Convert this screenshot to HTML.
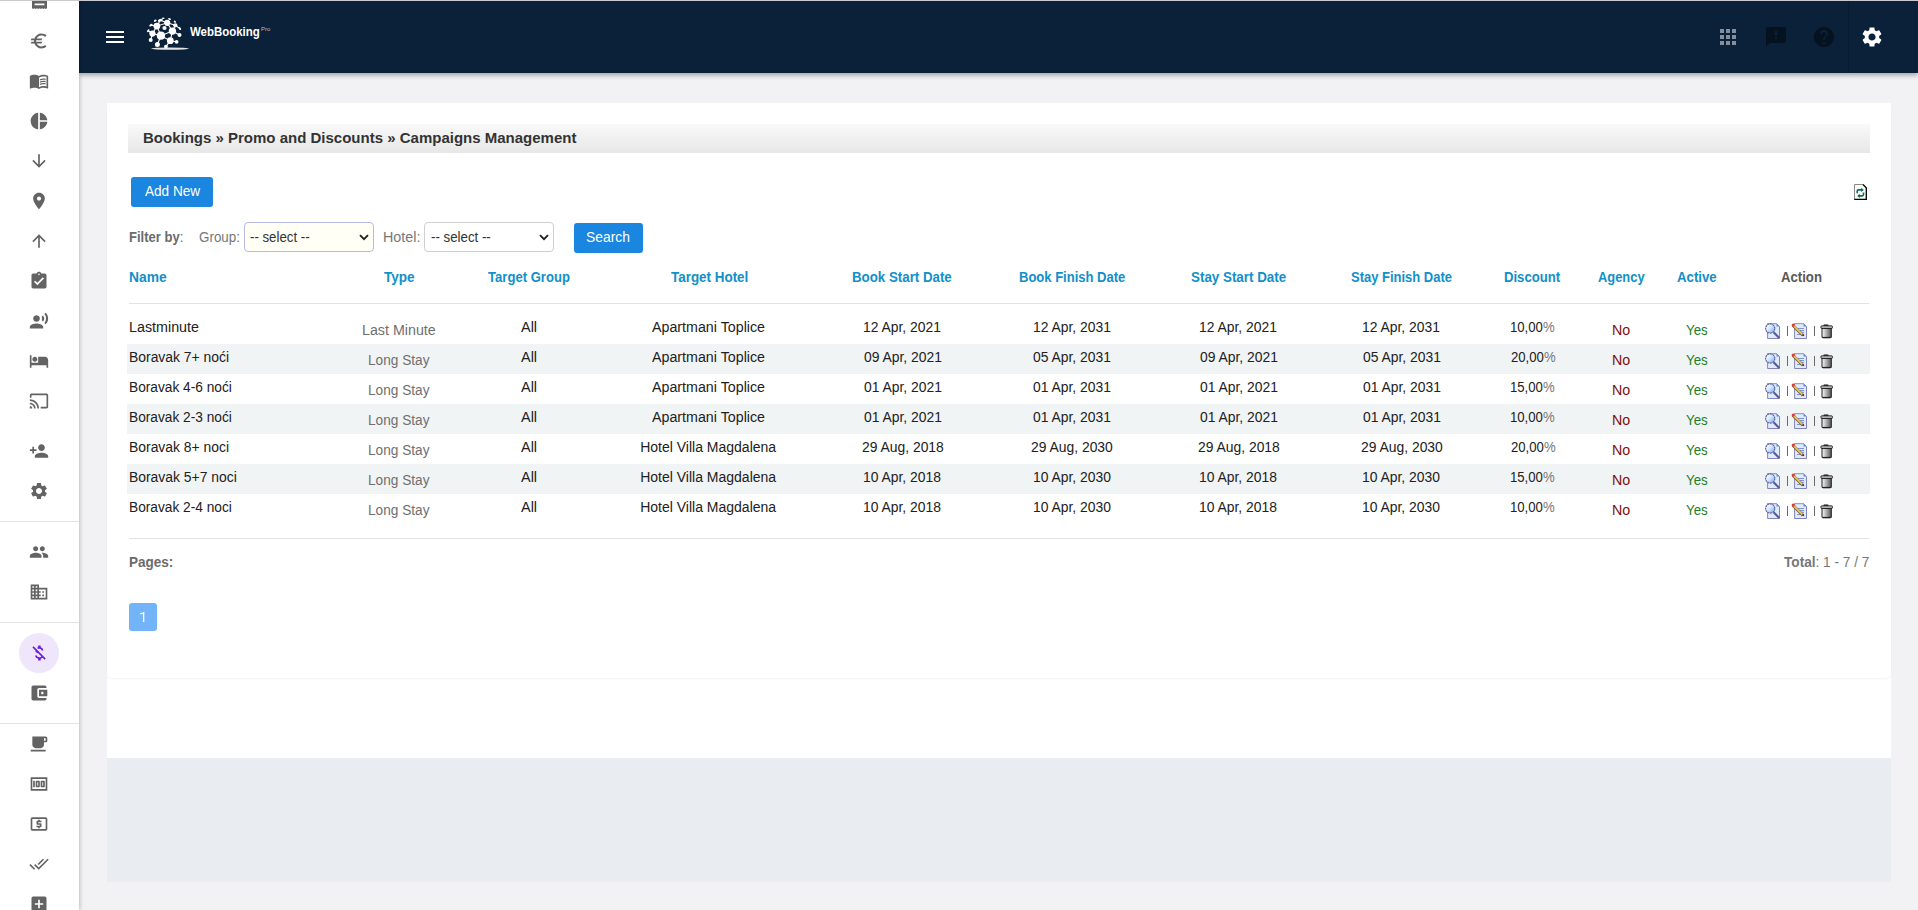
<!DOCTYPE html>
<html><head><meta charset="utf-8">
<style>
*{box-sizing:border-box}
html,body{margin:0;padding:0}
body{width:1918px;height:910px;overflow:hidden;position:relative;background:#f2f2f4;font-family:"Liberation Sans",sans-serif;color:#212121}
.abs{position:absolute}
.tx{position:absolute;white-space:nowrap;z-index:4}
#topline{left:0;top:0;width:1918px;height:1px;background:#c9cacc;z-index:5}
#side{left:0;top:1px;width:79px;height:909px;background:#fff;box-shadow:1px 0 4px rgba(0,0,0,.22);z-index:3}
#side svg{position:absolute;left:29px;width:20px;height:20px;fill:#636363}
#side .dv{position:absolute;left:0;width:79px;height:1px;background:#e4e4e4}
#hdr{left:79px;top:1px;width:1839px;height:72px;background:#0b2039;box-shadow:0 2px 5px rgba(0,0,0,.35);z-index:2}
#main{left:107px;top:103px;width:1784px;height:655px;background:#fff}
#card{left:107px;top:103px;width:1784px;height:575px;background:#fff;border-radius:5px;box-shadow:0 1px 2px rgba(0,0,0,.05)}
#foot{left:107px;top:758px;width:1784px;height:124px;background:#e9edf1}
#bc{left:128px;top:124px;width:1742px;height:29px;background:linear-gradient(#f9f9f9,#e7e7e7)}
.btn{position:absolute;background:#1a86df;border-radius:3px}
.sel{position:absolute;height:30px;border:1px solid #cfcfcf;border-radius:4px;background:#fff}
.hr{position:absolute;left:129px;width:1740px;height:1px;background:#e3e3e3}
.row{position:absolute;left:127px;width:1743px;height:30px;background:#f1f4f5}
</style></head><body>
<div id="topline" class="abs"></div>
<div id="side" class="abs">
<svg viewBox="0 0 24 24" style="top:30px"><path d="M15 18.5c-2.51 0-4.68-1.42-5.76-3.5H15l1-2H8.58c-.05-.33-.08-.66-.08-1s.03-.67.08-1H15l1-2H9.24C10.32 6.92 12.5 5.5 15 5.5c1.61 0 3.09.59 4.23 1.57L21 5.3C19.41 3.87 17.3 3 15 3c-3.92 0-7.24 2.51-8.48 6H3l-1 2h4.06c-.04.33-.06.66-.06 1s.02.67.06 1H3l-1 2h4.52c1.24 3.49 4.56 6 8.48 6 2.31 0 4.41-.87 6-2.3l-1.78-1.77c-1.13.98-2.6 1.57-4.22 1.57z"/></svg>
<svg viewBox="0 0 24 24" style="top:70px"><path d="M21 5c-1.11-.35-2.33-.5-3.5-.5-1.95 0-4.05.4-5.5 1.5-1.45-1.1-3.55-1.5-5.5-1.5S2.45 4.9 1 6v14.65c0 .25.25.5.5.5.1 0 .15-.05.25-.05C3.1 20.45 5.05 20 6.5 20c1.95 0 4.05.4 5.5 1.5 1.35-.85 3.8-1.5 5.5-1.5 1.65 0 3.35.3 4.75 1.05.1.05.15.05.25.05.25 0 .5-.25.5-.5V6c-.6-.45-1.25-.75-2-1zm0 13.5c-1.1-.35-2.3-.5-3.5-.5-1.7 0-4.15.65-5.5 1.5V8c1.35-.85 3.8-1.5 5.5-1.5 1.2 0 2.4.15 3.5.5v11.5z M17.5 10.5c.88 0 1.73.09 2.5.26V9.24c-.79-.15-1.64-.24-2.5-.24-1.7 0-3.24.29-4.5.83v1.66c1.13-.64 2.7-.99 4.5-.99zM13 12.49v1.66c1.13-.64 2.7-.99 4.5-.99.88 0 1.73.09 2.5.26V11.9c-.79-.15-1.64-.24-2.5-.24-1.7 0-3.24.3-4.5.83zM17.5 14.33c-1.7 0-3.24.29-4.5.83v1.66c1.13-.64 2.7-.99 4.5-.99.88 0 1.73.09 2.5.26v-1.52c-.79-.16-1.64-.24-2.5-.24z"/></svg>
<svg viewBox="0 0 24 24" style="top:110px"><path d="M11 2v20c-5.07-.5-9-4.79-9-10s3.93-9.5 9-10zm2.03 0v8.99H22c-.47-4.74-4.24-8.52-8.97-8.99zm0 11.01V22c4.74-.47 8.5-4.25 8.97-8.99h-8.97z"/></svg>
<svg viewBox="0 0 24 24" style="top:150px"><path d="M20 12l-1.41-1.41L13 16.17V4h-2v12.17l-5.58-5.59L4 12l8 8 8-8z"/></svg>
<svg viewBox="0 0 24 24" style="top:190px"><path d="M12 2C8.13 2 5 5.13 5 9c0 5.25 7 13 7 13s7-7.75 7-13c0-3.87-3.13-7-7-7zm0 9.5c-1.38 0-2.5-1.12-2.5-2.5s1.12-2.5 2.5-2.5 2.5 1.12 2.5 2.5-1.12 2.5-2.5 2.5z"/></svg>
<svg viewBox="0 0 24 24" style="top:230px"><path d="M4 12l1.41 1.41L11 7.83V20h2V7.83l5.58 5.59L20 12l-8-8-8 8z"/></svg>
<svg viewBox="0 0 24 24" style="top:270px"><path d="M19 3h-4.18C14.4 1.84 13.3 1 12 1c-1.3 0-2.4.84-2.82 2H5c-1.1 0-2 .9-2 2v14c0 1.1.9 2 2 2h14c1.1 0 2-.9 2-2V5c0-1.1-.9-2-2-2zm-7 0c.55 0 1 .45 1 1s-.45 1-1 1-1-.45-1-1 .45-1 1-1zm-2 14l-4-4 1.41-1.41L10 14.17l6.59-6.59L18 9l-8 8z"/></svg>
<svg viewBox="0 0 24 24" style="top:310px"><path d="M9 5a4 4 0 1 0 0.001 0z M9 15c-2.67 0-8 1.34-8 4v2h16v-2c0-2.66-5.33-4-8-4zm7.76-9.64l-1.68 1.69c.84 1.18.84 2.71 0 3.89l1.68 1.69c2.02-2.02 2.02-5.07 0-7.27zM20.07 2l-1.63 1.63c2.77 3.02 2.77 7.56 0 10.74L20.07 16c3.9-3.89 3.91-9.95 0-14z"/></svg>
<svg viewBox="0 0 24 24" style="top:350px"><path d="M7 13c1.66 0 3-1.34 3-3S8.66 7 7 7s-3 1.34-3 3 1.34 3 3 3zm12-6h-8v7H3V5H1v15h2v-3h18v3h2v-9c0-2.21-1.79-4-4-4z"/></svg>
<svg viewBox="0 0 24 24" style="top:390px"><path d="M21 3H3c-1.1 0-2 .9-2 2v3h2V5h18v14h-7v2h7c1.1 0 2-.9 2-2V5c0-1.1-.9-2-2-2zM1 18v3h3c0-1.66-1.34-3-3-3zm0-4v2c2.76 0 5 2.24 5 5h2c0-3.87-3.13-7-7-7zm0-4v2c4.97 0 9 4.03 9 9h2c0-6.08-4.93-11-11-11z"/></svg>
<svg viewBox="0 0 24 24" style="top:440px"><path d="M15 12c2.21 0 4-1.79 4-4s-1.79-4-4-4-4 1.79-4 4 1.79 4 4 4zm-9-2V7H4v3H1v2h3v3h2v-3h3v-2H6zm9 4c-2.67 0-8 1.34-8 4v2h16v-2c0-2.66-5.33-4-8-4z"/></svg>
<svg viewBox="0 0 24 24" style="top:480px"><path d="M19.14 12.94c.04-.3.06-.61.06-.94 0-.32-.02-.64-.07-.94l2.03-1.58c.18-.14.23-.41.12-.61l-1.92-3.32c-.12-.22-.37-.29-.59-.22l-2.39.96c-.5-.38-1.03-.7-1.62-.94l-.36-2.54c-.04-.24-.24-.41-.48-.41h-3.84c-.24 0-.43.17-.47.41l-.36 2.54c-.59.24-1.13.57-1.62.94l-2.39-.96c-.22-.08-.47 0-.59.22L2.74 8.87c-.12.21-.08.47.12.61l2.03 1.58c-.05.3-.09.63-.09.94s.02.64.07.94l-2.03 1.58c-.18.14-.23.41-.12.61l1.92 3.32c.12.22.37.29.59.22l2.39-.96c.5.38 1.03.7 1.62.94l.36 2.54c.05.24.24.41.48.41h3.84c.24 0 .44-.17.47-.41l.36-2.54c.59-.24 1.13-.56 1.62-.94l2.39.96c.22.08.47 0 .59-.22l1.92-3.32c.12-.22.07-.47-.12-.61l-2.01-1.58zM12 15.6c-1.98 0-3.6-1.62-3.6-3.6s1.62-3.6 3.6-3.6 3.6 1.62 3.6 3.6-1.62 3.6-3.6 3.6z"/></svg>
<svg viewBox="0 0 24 24" style="top:541px"><path d="M16 11c1.66 0 2.99-1.34 2.99-3S17.66 5 16 5c-1.66 0-3 1.34-3 3s1.34 3 3 3zm-8 0c1.66 0 2.99-1.34 2.99-3S9.66 5 8 5C6.34 5 5 6.34 5 8s1.34 3 3 3zm0 2c-2.33 0-7 1.17-7 3.5V19h14v-2.5c0-2.33-4.67-3.5-7-3.5zm8 0c-.29 0-.62.02-.97.05 1.16.84 1.97 1.97 1.97 3.45V19h6v-2.5c0-2.33-4.67-3.5-7-3.5z"/></svg>
<svg viewBox="0 0 24 24" style="top:581px"><path d="M12 7V3H2v18h20V7H12zM6 19H4v-2h2v2zm0-4H4v-2h2v2zm0-4H4V9h2v2zm0-4H4V5h2v2zm4 12H8v-2h2v2zm0-4H8v-2h2v2zm0-4H8V9h2v2zm0-4H8V5h2v2zm10 12h-8v-2h2v-2h-2v-2h2v-2h-2V9h8v10zm-2-8h-2v2h2v-2zm0 4h-2v2h2v-2z"/></svg>
<div style="position:absolute;left:19px;top:632px;width:40px;height:40px;border-radius:50%;background:#efe6fc"></div>
<svg viewBox="0 0 24 24" style="fill:#6a1be0;top:642px"><path d="M12.5 6.9c1.78 0 2.44.85 2.5 2.1h2.21c-.07-1.72-1.12-3.3-3.21-3.81V3h-3v2.16c-.53.12-1.03.3-1.48.54l1.47 1.47c.41-.17.91-.27 1.51-.27zM5.47 3.92L4.06 5.33 7.5 8.77c0 2.08 1.56 3.21 3.91 3.91l3.51 3.51c-.34.48-1.05.91-2.42.91-2.06 0-2.87-.92-2.98-2.1h-2.2c.12 2.19 1.76 3.42 3.68 3.83V21h3v-2.15c.96-.18 1.82-.55 2.45-1.12l2.22 2.22 1.41-1.41L5.47 3.92z"/></svg>
<svg viewBox="0 0 24 24" style="top:682px"><path d="M21 18v1c0 1.1-.9 2-2 2H5c-1.11 0-2-.9-2-2V5c0-1.1.89-2 2-2h14c1.1 0 2 .9 2 2v1h-9c-1.11 0-2 .9-2 2v8c0 1.1.89 2 2 2h9zm-9-2h10V8H12v8zm4-2.5c-.83 0-1.5-.67-1.5-1.5s.67-1.5 1.5-1.5 1.5.67 1.5 1.5-.67 1.5-1.5 1.5z"/></svg>
<svg viewBox="0 0 24 24" style="top:733px"><path d="M20 3H4v10c0 2.21 1.79 4 4 4h6c2.21 0 4-1.79 4-4v-3h2c1.11 0 2-.89 2-2V5c0-1.11-.89-2-2-2zm0 5h-2V5h2v3zM2 21h18v-2H2v2z"/></svg>
<svg viewBox="0 0 24 24" style="top:773px"><path d="M5 8h2v8H5zm7 0H9c-.55 0-1 .45-1 1v6c0 .55.45 1 1 1h3c.55 0 1-.45 1-1V9c0-.55-.45-1-1-1zm-1 6h-1v-4h1v4zm7-6h-3c-.55 0-1 .45-1 1v6c0 .55.45 1 1 1h3c.55 0 1-.45 1-1V9c0-.55-.45-1-1-1zm-1 6h-1v-4h1v4z M2 4v16h20V4H2zm2 14V6h16v12H4z"/></svg>
<svg viewBox="0 0 24 24" style="top:813px"><path d="M11 17h2v-1h1c.55 0 1-.45 1-1v-3c0-.55-.45-1-1-1h-3v-1h4V8h-2V7h-2v1h-1c-.55 0-1 .45-1 1v3c0 .55.45 1 1 1h3v1H9v2h2v1zm9-13H4c-1.11 0-1.99.89-1.99 2L2 18c0 1.11.89 2 2 2h16c1.11 0 2-.89 2-2V6c0-1.11-.89-2-2-2zm0 14H4V6h16v12z"/></svg>
<svg viewBox="0 0 24 24" style="top:853px"><path d="M18 7l-1.41-1.41-6.34 6.34 1.41 1.41L18 7zm4.24-1.41L11.66 16.17 7.48 12l-1.41 1.41L11.66 19l12-12-1.42-1.41zM.41 13.41L6 19l1.41-1.41L1.83 12 .41 13.41z"/></svg>
<svg viewBox="0 0 24 24" style="top:893px"><path d="M19 3H5c-1.11 0-2 .9-2 2v14c0 1.1.89 2 2 2h14c1.1 0 2-.9 2-2V5c0-1.1-.9-2-2-2zm-2 10h-4v4h-2v-4H7v-2h4V7h2v4h4v2z"/></svg>
<svg viewBox="0 0 15 9" style="left:31.5px;top:-1px;width:15px;height:9px"><path d="M0 0h15v8.2l-1.25 .8-1.25-.8-1.25 .8-1.25-.8-1.25 .8-1.25-.8-1.25 .8-1.25-.8-1.25 .8-1.25-.8-1.25 .8-1.25-.8-1.25 .8z M2.6 3.6v1.7h9.8V3.6z" fill-rule="evenodd"/></svg>
<div class="dv" style="top:520px"></div>
<div class="dv" style="top:621px"></div>
<div class="dv" style="top:722px"></div>
</div>
<div id="hdr" class="abs">
<div style="position:absolute;left:27px;top:30px;width:18px;height:2px;background:#fff"></div>
<div style="position:absolute;left:27px;top:35px;width:18px;height:2px;background:#fff"></div>
<div style="position:absolute;left:27px;top:40px;width:18px;height:2px;background:#fff"></div>
<svg viewBox="0 0 24 24" style="position:absolute;left:1637px;top:24px;width:24px;height:24px;fill:#858f9b"><path d="M4 8h4V4H4v4zm6 12h4v-4h-4v4zm-6 0h4v-4H4v4zm0-6h4v-4H4v4zm6 0h4v-4h-4v4zm6-10v4h4V4h-4zm-6 4h4V4h-4v4zm6 6h4v-4h-4v4zm0 6h4v-4h-4v4z"/></svg>
<svg viewBox="0 0 24 24" style="position:absolute;left:1685px;top:24px;width:24px;height:24px;fill:#051220"><path d="M20 2H4c-1.1 0-1.99.9-1.99 2L2 22l4-4h14c1.1 0 2-.9 2-2V4c0-1.1-.9-2-2-2zm-7 12h-2v-2h2v2zm0-4h-2V6h2v4z"/></svg>
<svg viewBox="0 0 24 24" style="position:absolute;left:1733px;top:24px;width:24px;height:24px;fill:#051220"><path d="M12 2C6.48 2 2 6.48 2 12s4.48 10 10 10 10-4.48 10-10S17.52 2 12 2zm1 17h-2v-2h2v2zm2.07-7.75l-.9.92C13.45 12.9 13 13.5 13 15h-2v-.5c0-1.1.45-2.1 1.17-2.83l1.24-1.26c.37-.36.59-.86.59-1.41 0-1.1-.9-2-2-2s-2 .9-2 2H8c0-2.21 1.79-4 4-4s4 1.79 4 4c0 .88-.36 1.68-.93 2.25z"/></svg>
<div style="position:absolute;left:1769px;top:0;width:1px;height:72px;background:#0a1b30"></div>
<svg viewBox="0 0 24 24" style="position:absolute;left:1781px;top:24px;width:24px;height:24px;fill:#fff"><path d="M19.14 12.94c.04-.3.06-.61.06-.94 0-.32-.02-.64-.07-.94l2.03-1.58c.18-.14.23-.41.12-.61l-1.92-3.32c-.12-.22-.37-.29-.59-.22l-2.39.96c-.5-.38-1.03-.7-1.62-.94l-.36-2.54c-.04-.24-.24-.41-.48-.41h-3.84c-.24 0-.43.17-.47.41l-.36 2.54c-.59.24-1.13.57-1.62.94l-2.39-.96c-.22-.08-.47 0-.59.22L2.74 8.87c-.12.21-.08.47.12.61l2.03 1.58c-.05.3-.09.63-.09.94s.02.64.07.94l-2.03 1.58c-.18.14-.23.41-.12.61l1.92 3.32c.12.22.37.29.59.22l2.39-.96c.5.38 1.03.7 1.62.94l.36 2.54c.05.24.24.41.48.41h3.84c.24 0 .44-.17.47-.41l.36-2.54c.59-.24 1.13-.56 1.62-.94l2.39.96c.22.08.47 0 .59-.22l1.92-3.32c.12-.22.07-.47-.12-.61l-2.01-1.58zM12 15.6c-1.98 0-3.6-1.62-3.6-3.6s1.62-3.6 3.6-3.6 3.6 1.62 3.6 3.6-1.62 3.6-3.6 3.6z"/></svg>
</div>
<div id="main" class="abs"></div>
<div id="card" class="abs"></div>
<div id="foot" class="abs"></div>
<div id="bc" class="abs"></div>
<div class="btn" style="left:131px;top:177px;width:82px;height:30px"></div>
<div class="sel" style="left:244px;top:222px;width:130px;background:#fffff6;border-color:#b9b9e6"></div>
<div class="sel" style="left:424px;top:222px;width:130px"></div>
<div class="btn" style="left:574px;top:223px;width:69px;height:30px"></div>
<div class="hr" style="top:303px"></div>
<div class="row" style="top:344px"></div>
<div class="row" style="top:404px"></div>
<div class="row" style="top:464px"></div>
<div class="hr" style="top:538px"></div>
<div class="abs" style="left:129px;top:603px;width:28px;height:28px;background:#72b4f7;border-radius:3px"></div>
<svg viewBox="0 0 28 28" style="position:absolute;left:129px;top:603px;width:28px;height:28px;z-index:4"><path d="M14.6 9.3V19" stroke="#fff" stroke-width="1.4" fill="none"/><path d="M15.3 9.2l-4.2 1.1v1.1l4.2-.9z" fill="#fff"/></svg>
<svg viewBox="0 0 48 38" style="position:absolute;left:144px;top:14px;width:48px;height:38px;z-index:4" fill="#fff">
<ellipse cx="26" cy="34.6" rx="19" ry="1.2" fill="#e4e4e4"/>
<g stroke="#fff" stroke-width="1.1" fill="none">
<path d="M16.9 21.7L28.4 17.1L23.2 8.8L12.9 12.1L8.4 19.6L16.9 21.7L26.3 26.7L28.4 17.1M16.9 21.7L13.4 30.5M12.9 12.1L16.9 21.7M23.2 8.8L31.3 11.3L28.4 17.1L35.5 21.1M26.3 26.7L32.6 27.8M8.4 19.6L6.7 26.1M26.3 26.7L21.9 32.6M12.9 12.1L6.9 11.1M23.2 8.8L16.3 6.3M31.3 11.3L35.9 14.6M12.9 12.1L16.3 6.3M8.4 19.6L4.2 16.7"/>
</g>
<circle cx="16.9" cy="21.7" r="4.1"/><circle cx="28.4" cy="17.1" r="3.7"/><circle cx="12.9" cy="12.1" r="3.4"/>
<circle cx="8.4" cy="19.6" r="3.1"/><circle cx="23.2" cy="8.8" r="3.1"/><circle cx="26.3" cy="26.7" r="3.4"/>
<circle cx="13.4" cy="30.5" r="2.5"/><circle cx="6.7" cy="26.1" r="2"/><circle cx="32.6" cy="27.8" r="1.9"/>
<circle cx="35.5" cy="21.1" r="2"/><circle cx="31.3" cy="11.3" r="2.1"/><circle cx="21.9" cy="32.6" r="1.9"/>
<circle cx="20.5" cy="14" r="2.1"/>
<ellipse cx="16.3" cy="6.3" rx="2.6" ry="1.4" transform="rotate(-20 16.3 6.3)"/>
<ellipse cx="11.3" cy="6.7" rx="1.5" ry="1" transform="rotate(-30 11.3 6.7)"/>
<ellipse cx="6.9" cy="11.1" rx="1.8" ry="1.1" transform="rotate(-35 6.9 11.1)"/>
<ellipse cx="4.2" cy="16.7" rx="1.7" ry="1" transform="rotate(-55 4.2 16.7)"/>
<ellipse cx="19.2" cy="4.2" rx="1.4" ry="0.8"/>
<ellipse cx="25.5" cy="5" rx="1.5" ry="0.9" transform="rotate(20 25.5 5)"/>
<ellipse cx="30.9" cy="7.7" rx="1.3" ry="0.9" transform="rotate(35 30.9 7.7)"/>
<ellipse cx="35.9" cy="14.6" rx="1.6" ry="1" transform="rotate(55 35.9 14.6)"/>
</svg>
<svg viewBox="0 0 16 16" style="position:absolute;left:1765px;top:323px;width:16px;height:16px">
<defs><linearGradient id="mg0" x1="0" y1="0" x2="1" y2="1"><stop offset="0" stop-color="#fff"/><stop offset=".45" stop-color="#d6eafc"/><stop offset="1" stop-color="#6fa6e8"/></linearGradient></defs>
<path d="M2.6 .6h8.9l3 3v11.9H2.6z" fill="#dfeafd" stroke="#7676b6" stroke-width=".9"/><path d="M2.6 .6h8.9" stroke="#8fa8e4" stroke-width=".9"/><path d="M11.5 .6l3 3h-3z" fill="#5f8fdc"/>
<circle cx="5.2" cy="5.5" r="4.6" fill="url(#mg0)" stroke="#5b5ba0" stroke-width="1.1" stroke-dasharray="2 .6"/>
<path d="M8.6 9.2L14.3 15" stroke="#58589a" stroke-width="2.1"/></svg>
<div style="position:absolute;left:1787px;top:326px;width:1px;height:10px;background:#6a6a6a"></div>
<svg viewBox="0 0 16 16" style="position:absolute;left:1791px;top:323px;width:16px;height:16px">
<path d="M3.6 .6h8.9l3 3v11.9H3.6z" fill="#dfeafd" stroke="#7676b6" stroke-width=".9"/><path d="M3.6 .6h8.9" stroke="#8fa8e4" stroke-width=".9"/><path d="M12.5 .6l3 3h-3z" fill="#5f8fdc"/>
<path d="M6 5.5h7M7 7.5h6M8 9.3h5M6 11.5h7" stroke="#6f8ad6" stroke-width=".9"/>
<path d="M1.8 2.2L11.9 12.2" stroke="#6b5a3a" stroke-width="3"/><path d="M2.3 2.4L11.8 11.8" stroke="#f2c650" stroke-width="1.8"/>
<circle cx="2.2" cy="2.1" r="1.6" fill="#e23c3c"/><path d="M11.5 11.5l1.3 1.3" stroke="#3a2a10" stroke-width="1.6"/></svg>
<div style="position:absolute;left:1814px;top:326px;width:1px;height:10px;background:#6a6a6a"></div>
<svg viewBox="0 0 13 15" style="position:absolute;left:1819.5px;top:323.5px;width:13px;height:15px">
<defs><linearGradient id="tg0" x1="0" x2="1"><stop offset="0" stop-color="#fafafa"/><stop offset=".5" stop-color="#aaa"/><stop offset="1" stop-color="#555"/></linearGradient></defs>
<rect x="3.5" y=".4" width="5" height="1.4" rx=".6" fill="#111"/>
<rect x="1" y="1.9" width="11.3" height="2.5" rx=".5" fill="#d8d8d8" stroke="#1a1a1a"/>
<path d="M2 4.4h9.3v9H2z" fill="url(#tg0)" stroke="#1e1e1e"/><rect x="2.8" y="13.2" width="7.6" height="1.1" fill="#1e1e1e"/></svg>
<svg viewBox="0 0 16 16" style="position:absolute;left:1765px;top:353px;width:16px;height:16px">
<defs><linearGradient id="mg1" x1="0" y1="0" x2="1" y2="1"><stop offset="0" stop-color="#fff"/><stop offset=".45" stop-color="#d6eafc"/><stop offset="1" stop-color="#6fa6e8"/></linearGradient></defs>
<path d="M2.6 .6h8.9l3 3v11.9H2.6z" fill="#dfeafd" stroke="#7676b6" stroke-width=".9"/><path d="M2.6 .6h8.9" stroke="#8fa8e4" stroke-width=".9"/><path d="M11.5 .6l3 3h-3z" fill="#5f8fdc"/>
<circle cx="5.2" cy="5.5" r="4.6" fill="url(#mg1)" stroke="#5b5ba0" stroke-width="1.1" stroke-dasharray="2 .6"/>
<path d="M8.6 9.2L14.3 15" stroke="#58589a" stroke-width="2.1"/></svg>
<div style="position:absolute;left:1787px;top:356px;width:1px;height:10px;background:#6a6a6a"></div>
<svg viewBox="0 0 16 16" style="position:absolute;left:1791px;top:353px;width:16px;height:16px">
<path d="M3.6 .6h8.9l3 3v11.9H3.6z" fill="#dfeafd" stroke="#7676b6" stroke-width=".9"/><path d="M3.6 .6h8.9" stroke="#8fa8e4" stroke-width=".9"/><path d="M12.5 .6l3 3h-3z" fill="#5f8fdc"/>
<path d="M6 5.5h7M7 7.5h6M8 9.3h5M6 11.5h7" stroke="#6f8ad6" stroke-width=".9"/>
<path d="M1.8 2.2L11.9 12.2" stroke="#6b5a3a" stroke-width="3"/><path d="M2.3 2.4L11.8 11.8" stroke="#f2c650" stroke-width="1.8"/>
<circle cx="2.2" cy="2.1" r="1.6" fill="#e23c3c"/><path d="M11.5 11.5l1.3 1.3" stroke="#3a2a10" stroke-width="1.6"/></svg>
<div style="position:absolute;left:1814px;top:356px;width:1px;height:10px;background:#6a6a6a"></div>
<svg viewBox="0 0 13 15" style="position:absolute;left:1819.5px;top:353.5px;width:13px;height:15px">
<defs><linearGradient id="tg1" x1="0" x2="1"><stop offset="0" stop-color="#fafafa"/><stop offset=".5" stop-color="#aaa"/><stop offset="1" stop-color="#555"/></linearGradient></defs>
<rect x="3.5" y=".4" width="5" height="1.4" rx=".6" fill="#111"/>
<rect x="1" y="1.9" width="11.3" height="2.5" rx=".5" fill="#d8d8d8" stroke="#1a1a1a"/>
<path d="M2 4.4h9.3v9H2z" fill="url(#tg1)" stroke="#1e1e1e"/><rect x="2.8" y="13.2" width="7.6" height="1.1" fill="#1e1e1e"/></svg>
<svg viewBox="0 0 16 16" style="position:absolute;left:1765px;top:383px;width:16px;height:16px">
<defs><linearGradient id="mg2" x1="0" y1="0" x2="1" y2="1"><stop offset="0" stop-color="#fff"/><stop offset=".45" stop-color="#d6eafc"/><stop offset="1" stop-color="#6fa6e8"/></linearGradient></defs>
<path d="M2.6 .6h8.9l3 3v11.9H2.6z" fill="#dfeafd" stroke="#7676b6" stroke-width=".9"/><path d="M2.6 .6h8.9" stroke="#8fa8e4" stroke-width=".9"/><path d="M11.5 .6l3 3h-3z" fill="#5f8fdc"/>
<circle cx="5.2" cy="5.5" r="4.6" fill="url(#mg2)" stroke="#5b5ba0" stroke-width="1.1" stroke-dasharray="2 .6"/>
<path d="M8.6 9.2L14.3 15" stroke="#58589a" stroke-width="2.1"/></svg>
<div style="position:absolute;left:1787px;top:386px;width:1px;height:10px;background:#6a6a6a"></div>
<svg viewBox="0 0 16 16" style="position:absolute;left:1791px;top:383px;width:16px;height:16px">
<path d="M3.6 .6h8.9l3 3v11.9H3.6z" fill="#dfeafd" stroke="#7676b6" stroke-width=".9"/><path d="M3.6 .6h8.9" stroke="#8fa8e4" stroke-width=".9"/><path d="M12.5 .6l3 3h-3z" fill="#5f8fdc"/>
<path d="M6 5.5h7M7 7.5h6M8 9.3h5M6 11.5h7" stroke="#6f8ad6" stroke-width=".9"/>
<path d="M1.8 2.2L11.9 12.2" stroke="#6b5a3a" stroke-width="3"/><path d="M2.3 2.4L11.8 11.8" stroke="#f2c650" stroke-width="1.8"/>
<circle cx="2.2" cy="2.1" r="1.6" fill="#e23c3c"/><path d="M11.5 11.5l1.3 1.3" stroke="#3a2a10" stroke-width="1.6"/></svg>
<div style="position:absolute;left:1814px;top:386px;width:1px;height:10px;background:#6a6a6a"></div>
<svg viewBox="0 0 13 15" style="position:absolute;left:1819.5px;top:383.5px;width:13px;height:15px">
<defs><linearGradient id="tg2" x1="0" x2="1"><stop offset="0" stop-color="#fafafa"/><stop offset=".5" stop-color="#aaa"/><stop offset="1" stop-color="#555"/></linearGradient></defs>
<rect x="3.5" y=".4" width="5" height="1.4" rx=".6" fill="#111"/>
<rect x="1" y="1.9" width="11.3" height="2.5" rx=".5" fill="#d8d8d8" stroke="#1a1a1a"/>
<path d="M2 4.4h9.3v9H2z" fill="url(#tg2)" stroke="#1e1e1e"/><rect x="2.8" y="13.2" width="7.6" height="1.1" fill="#1e1e1e"/></svg>
<svg viewBox="0 0 16 16" style="position:absolute;left:1765px;top:413px;width:16px;height:16px">
<defs><linearGradient id="mg3" x1="0" y1="0" x2="1" y2="1"><stop offset="0" stop-color="#fff"/><stop offset=".45" stop-color="#d6eafc"/><stop offset="1" stop-color="#6fa6e8"/></linearGradient></defs>
<path d="M2.6 .6h8.9l3 3v11.9H2.6z" fill="#dfeafd" stroke="#7676b6" stroke-width=".9"/><path d="M2.6 .6h8.9" stroke="#8fa8e4" stroke-width=".9"/><path d="M11.5 .6l3 3h-3z" fill="#5f8fdc"/>
<circle cx="5.2" cy="5.5" r="4.6" fill="url(#mg3)" stroke="#5b5ba0" stroke-width="1.1" stroke-dasharray="2 .6"/>
<path d="M8.6 9.2L14.3 15" stroke="#58589a" stroke-width="2.1"/></svg>
<div style="position:absolute;left:1787px;top:416px;width:1px;height:10px;background:#6a6a6a"></div>
<svg viewBox="0 0 16 16" style="position:absolute;left:1791px;top:413px;width:16px;height:16px">
<path d="M3.6 .6h8.9l3 3v11.9H3.6z" fill="#dfeafd" stroke="#7676b6" stroke-width=".9"/><path d="M3.6 .6h8.9" stroke="#8fa8e4" stroke-width=".9"/><path d="M12.5 .6l3 3h-3z" fill="#5f8fdc"/>
<path d="M6 5.5h7M7 7.5h6M8 9.3h5M6 11.5h7" stroke="#6f8ad6" stroke-width=".9"/>
<path d="M1.8 2.2L11.9 12.2" stroke="#6b5a3a" stroke-width="3"/><path d="M2.3 2.4L11.8 11.8" stroke="#f2c650" stroke-width="1.8"/>
<circle cx="2.2" cy="2.1" r="1.6" fill="#e23c3c"/><path d="M11.5 11.5l1.3 1.3" stroke="#3a2a10" stroke-width="1.6"/></svg>
<div style="position:absolute;left:1814px;top:416px;width:1px;height:10px;background:#6a6a6a"></div>
<svg viewBox="0 0 13 15" style="position:absolute;left:1819.5px;top:413.5px;width:13px;height:15px">
<defs><linearGradient id="tg3" x1="0" x2="1"><stop offset="0" stop-color="#fafafa"/><stop offset=".5" stop-color="#aaa"/><stop offset="1" stop-color="#555"/></linearGradient></defs>
<rect x="3.5" y=".4" width="5" height="1.4" rx=".6" fill="#111"/>
<rect x="1" y="1.9" width="11.3" height="2.5" rx=".5" fill="#d8d8d8" stroke="#1a1a1a"/>
<path d="M2 4.4h9.3v9H2z" fill="url(#tg3)" stroke="#1e1e1e"/><rect x="2.8" y="13.2" width="7.6" height="1.1" fill="#1e1e1e"/></svg>
<svg viewBox="0 0 16 16" style="position:absolute;left:1765px;top:443px;width:16px;height:16px">
<defs><linearGradient id="mg4" x1="0" y1="0" x2="1" y2="1"><stop offset="0" stop-color="#fff"/><stop offset=".45" stop-color="#d6eafc"/><stop offset="1" stop-color="#6fa6e8"/></linearGradient></defs>
<path d="M2.6 .6h8.9l3 3v11.9H2.6z" fill="#dfeafd" stroke="#7676b6" stroke-width=".9"/><path d="M2.6 .6h8.9" stroke="#8fa8e4" stroke-width=".9"/><path d="M11.5 .6l3 3h-3z" fill="#5f8fdc"/>
<circle cx="5.2" cy="5.5" r="4.6" fill="url(#mg4)" stroke="#5b5ba0" stroke-width="1.1" stroke-dasharray="2 .6"/>
<path d="M8.6 9.2L14.3 15" stroke="#58589a" stroke-width="2.1"/></svg>
<div style="position:absolute;left:1787px;top:446px;width:1px;height:10px;background:#6a6a6a"></div>
<svg viewBox="0 0 16 16" style="position:absolute;left:1791px;top:443px;width:16px;height:16px">
<path d="M3.6 .6h8.9l3 3v11.9H3.6z" fill="#dfeafd" stroke="#7676b6" stroke-width=".9"/><path d="M3.6 .6h8.9" stroke="#8fa8e4" stroke-width=".9"/><path d="M12.5 .6l3 3h-3z" fill="#5f8fdc"/>
<path d="M6 5.5h7M7 7.5h6M8 9.3h5M6 11.5h7" stroke="#6f8ad6" stroke-width=".9"/>
<path d="M1.8 2.2L11.9 12.2" stroke="#6b5a3a" stroke-width="3"/><path d="M2.3 2.4L11.8 11.8" stroke="#f2c650" stroke-width="1.8"/>
<circle cx="2.2" cy="2.1" r="1.6" fill="#e23c3c"/><path d="M11.5 11.5l1.3 1.3" stroke="#3a2a10" stroke-width="1.6"/></svg>
<div style="position:absolute;left:1814px;top:446px;width:1px;height:10px;background:#6a6a6a"></div>
<svg viewBox="0 0 13 15" style="position:absolute;left:1819.5px;top:443.5px;width:13px;height:15px">
<defs><linearGradient id="tg4" x1="0" x2="1"><stop offset="0" stop-color="#fafafa"/><stop offset=".5" stop-color="#aaa"/><stop offset="1" stop-color="#555"/></linearGradient></defs>
<rect x="3.5" y=".4" width="5" height="1.4" rx=".6" fill="#111"/>
<rect x="1" y="1.9" width="11.3" height="2.5" rx=".5" fill="#d8d8d8" stroke="#1a1a1a"/>
<path d="M2 4.4h9.3v9H2z" fill="url(#tg4)" stroke="#1e1e1e"/><rect x="2.8" y="13.2" width="7.6" height="1.1" fill="#1e1e1e"/></svg>
<svg viewBox="0 0 16 16" style="position:absolute;left:1765px;top:473px;width:16px;height:16px">
<defs><linearGradient id="mg5" x1="0" y1="0" x2="1" y2="1"><stop offset="0" stop-color="#fff"/><stop offset=".45" stop-color="#d6eafc"/><stop offset="1" stop-color="#6fa6e8"/></linearGradient></defs>
<path d="M2.6 .6h8.9l3 3v11.9H2.6z" fill="#dfeafd" stroke="#7676b6" stroke-width=".9"/><path d="M2.6 .6h8.9" stroke="#8fa8e4" stroke-width=".9"/><path d="M11.5 .6l3 3h-3z" fill="#5f8fdc"/>
<circle cx="5.2" cy="5.5" r="4.6" fill="url(#mg5)" stroke="#5b5ba0" stroke-width="1.1" stroke-dasharray="2 .6"/>
<path d="M8.6 9.2L14.3 15" stroke="#58589a" stroke-width="2.1"/></svg>
<div style="position:absolute;left:1787px;top:476px;width:1px;height:10px;background:#6a6a6a"></div>
<svg viewBox="0 0 16 16" style="position:absolute;left:1791px;top:473px;width:16px;height:16px">
<path d="M3.6 .6h8.9l3 3v11.9H3.6z" fill="#dfeafd" stroke="#7676b6" stroke-width=".9"/><path d="M3.6 .6h8.9" stroke="#8fa8e4" stroke-width=".9"/><path d="M12.5 .6l3 3h-3z" fill="#5f8fdc"/>
<path d="M6 5.5h7M7 7.5h6M8 9.3h5M6 11.5h7" stroke="#6f8ad6" stroke-width=".9"/>
<path d="M1.8 2.2L11.9 12.2" stroke="#6b5a3a" stroke-width="3"/><path d="M2.3 2.4L11.8 11.8" stroke="#f2c650" stroke-width="1.8"/>
<circle cx="2.2" cy="2.1" r="1.6" fill="#e23c3c"/><path d="M11.5 11.5l1.3 1.3" stroke="#3a2a10" stroke-width="1.6"/></svg>
<div style="position:absolute;left:1814px;top:476px;width:1px;height:10px;background:#6a6a6a"></div>
<svg viewBox="0 0 13 15" style="position:absolute;left:1819.5px;top:473.5px;width:13px;height:15px">
<defs><linearGradient id="tg5" x1="0" x2="1"><stop offset="0" stop-color="#fafafa"/><stop offset=".5" stop-color="#aaa"/><stop offset="1" stop-color="#555"/></linearGradient></defs>
<rect x="3.5" y=".4" width="5" height="1.4" rx=".6" fill="#111"/>
<rect x="1" y="1.9" width="11.3" height="2.5" rx=".5" fill="#d8d8d8" stroke="#1a1a1a"/>
<path d="M2 4.4h9.3v9H2z" fill="url(#tg5)" stroke="#1e1e1e"/><rect x="2.8" y="13.2" width="7.6" height="1.1" fill="#1e1e1e"/></svg>
<svg viewBox="0 0 16 16" style="position:absolute;left:1765px;top:503px;width:16px;height:16px">
<defs><linearGradient id="mg6" x1="0" y1="0" x2="1" y2="1"><stop offset="0" stop-color="#fff"/><stop offset=".45" stop-color="#d6eafc"/><stop offset="1" stop-color="#6fa6e8"/></linearGradient></defs>
<path d="M2.6 .6h8.9l3 3v11.9H2.6z" fill="#dfeafd" stroke="#7676b6" stroke-width=".9"/><path d="M2.6 .6h8.9" stroke="#8fa8e4" stroke-width=".9"/><path d="M11.5 .6l3 3h-3z" fill="#5f8fdc"/>
<circle cx="5.2" cy="5.5" r="4.6" fill="url(#mg6)" stroke="#5b5ba0" stroke-width="1.1" stroke-dasharray="2 .6"/>
<path d="M8.6 9.2L14.3 15" stroke="#58589a" stroke-width="2.1"/></svg>
<div style="position:absolute;left:1787px;top:506px;width:1px;height:10px;background:#6a6a6a"></div>
<svg viewBox="0 0 16 16" style="position:absolute;left:1791px;top:503px;width:16px;height:16px">
<path d="M3.6 .6h8.9l3 3v11.9H3.6z" fill="#dfeafd" stroke="#7676b6" stroke-width=".9"/><path d="M3.6 .6h8.9" stroke="#8fa8e4" stroke-width=".9"/><path d="M12.5 .6l3 3h-3z" fill="#5f8fdc"/>
<path d="M6 5.5h7M7 7.5h6M8 9.3h5M6 11.5h7" stroke="#6f8ad6" stroke-width=".9"/>
<path d="M1.8 2.2L11.9 12.2" stroke="#6b5a3a" stroke-width="3"/><path d="M2.3 2.4L11.8 11.8" stroke="#f2c650" stroke-width="1.8"/>
<circle cx="2.2" cy="2.1" r="1.6" fill="#e23c3c"/><path d="M11.5 11.5l1.3 1.3" stroke="#3a2a10" stroke-width="1.6"/></svg>
<div style="position:absolute;left:1814px;top:506px;width:1px;height:10px;background:#6a6a6a"></div>
<svg viewBox="0 0 13 15" style="position:absolute;left:1819.5px;top:503.5px;width:13px;height:15px">
<defs><linearGradient id="tg6" x1="0" x2="1"><stop offset="0" stop-color="#fafafa"/><stop offset=".5" stop-color="#aaa"/><stop offset="1" stop-color="#555"/></linearGradient></defs>
<rect x="3.5" y=".4" width="5" height="1.4" rx=".6" fill="#111"/>
<rect x="1" y="1.9" width="11.3" height="2.5" rx=".5" fill="#d8d8d8" stroke="#1a1a1a"/>
<path d="M2 4.4h9.3v9H2z" fill="url(#tg6)" stroke="#1e1e1e"/><rect x="2.8" y="13.2" width="7.6" height="1.1" fill="#1e1e1e"/></svg>
<svg viewBox="0 0 13 16" style="position:absolute;left:1854px;top:184px;width:13px;height:16px">
<path d="M.5 .5h9l3 3v11.5H.5z" fill="#fcfcf4"/>
<path d="M.5 15.5V.5h8.5" stroke="#8a8a8a" fill="none"/><path d="M9 .5l3.3 3.3V15.3H.3" stroke="#000" stroke-width="1.3" fill="none"/>
<path d="M3.2 9.2V7.2q0-1.3 1.3-1.3H8" stroke="#0d6a6a" stroke-width="1.6" fill="none"/><path d="M7.2 3.8l2.6 2.1-2.6 2.2z" fill="#0d6a6a"/>
<path d="M9.5 8.6v2q0 1.3-1.3 1.3H5" stroke="#0d6a6a" stroke-width="1.6" fill="none"/><path d="M5.8 9.7l-2.6 2.2 2.6 2.1z" fill="#0d6a6a"/>
</svg>
<svg viewBox="0 0 10 7" style="position:absolute;left:359px;top:234px;width:10px;height:7px"><path d="M1 1.2l4 4 4-4" stroke="#222" stroke-width="1.9" fill="none"/></svg>
<svg viewBox="0 0 10 7" style="position:absolute;left:539.2px;top:234px;width:10px;height:7px"><path d="M1 1.2l4 4 4-4" stroke="#222" stroke-width="1.9" fill="none"/></svg>
<div class="tx" id="t0" style="top:130.30px;font-size:15px;line-height:15px;color:#333;transform-origin:0 0;font-weight:bold;left:143.00px;">Bookings » Promo and Discounts » Campaigns Management</div>
<div class="tx" id="t1" style="top:184.00px;font-size:14px;line-height:14px;color:#fff;transform-origin:0 0;left:144.70px;transform:scaleX(0.9702);">Add New</div>
<div class="tx" id="t2" style="top:229.80px;font-size:14px;line-height:14px;color:#fff;transform-origin:0 0;left:585.71px;transform:scaleX(0.9907);">Search</div>
<div class="tx" id="t3" style="top:229.80px;font-size:14px;line-height:14px;color:#6b6b6b;transform-origin:0 0;font-weight:bold;left:128.77px;transform:scaleX(0.9298);">Filter by<span style="font-weight:normal">:</span></div>
<div class="tx" id="t4" style="top:229.80px;font-size:14px;line-height:14px;color:#777;transform-origin:0 0;left:199.30px;transform:scaleX(0.9571);">Group:</div>
<div class="tx" id="t5" style="top:229.80px;font-size:14px;line-height:14px;color:#777;transform-origin:0 0;left:383.48px;transform:scaleX(1.0229);">Hotel:</div>
<div class="tx" id="t6" style="top:229.80px;font-size:14px;line-height:14px;color:#333;transform-origin:0 0;left:250.40px;transform:scaleX(0.9460);">-- select --</div>
<div class="tx" id="t7" style="top:229.80px;font-size:14px;line-height:14px;color:#333;transform-origin:0 0;left:431.20px;transform:scaleX(0.9492);">-- select --</div>
<div class="tx" id="t8" style="top:270.00px;font-size:14px;line-height:14px;color:#1290c8;transform-origin:0 0;font-weight:bold;left:128.51px;transform:scaleX(0.9865);">Name</div>
<div class="tx" id="t9" style="top:270.00px;font-size:14px;line-height:14px;color:#1290c8;transform-origin:0 0;font-weight:bold;left:384.00px;transform:scaleX(0.9677);">Type</div>
<div class="tx" id="t10" style="top:270.00px;font-size:14px;line-height:14px;color:#1290c8;transform-origin:0 0;font-weight:bold;left:488.35px;transform:scaleX(0.9345);">Target Group</div>
<div class="tx" id="t11" style="top:270.00px;font-size:14px;line-height:14px;color:#1290c8;transform-origin:0 0;font-weight:bold;left:670.65px;transform:scaleX(0.9587);">Target Hotel</div>
<div class="tx" id="t12" style="top:270.00px;font-size:14px;line-height:14px;color:#1290c8;transform-origin:0 0;font-weight:bold;left:852.45px;transform:scaleX(0.9500);">Book Start Date</div>
<div class="tx" id="t13" style="top:270.00px;font-size:14px;line-height:14px;color:#1290c8;transform-origin:0 0;font-weight:bold;left:1019.17px;transform:scaleX(0.9292);">Book Finish Date</div>
<div class="tx" id="t14" style="top:270.00px;font-size:14px;line-height:14px;color:#1290c8;transform-origin:0 0;font-weight:bold;left:1191.40px;transform:scaleX(0.9556);">Stay Start Date</div>
<div class="tx" id="t15" style="top:270.00px;font-size:14px;line-height:14px;color:#1290c8;transform-origin:0 0;font-weight:bold;left:1350.70px;transform:scaleX(0.9266);">Stay Finish Date</div>
<div class="tx" id="t16" style="top:270.00px;font-size:14px;line-height:14px;color:#1290c8;transform-origin:0 0;font-weight:bold;left:1504.41px;transform:scaleX(0.9373);">Discount</div>
<div class="tx" id="t17" style="top:270.00px;font-size:14px;line-height:14px;color:#1290c8;transform-origin:0 0;font-weight:bold;left:1597.80px;transform:scaleX(0.9216);">Agency</div>
<div class="tx" id="t18" style="top:270.00px;font-size:14px;line-height:14px;color:#1290c8;transform-origin:0 0;font-weight:bold;left:1677.05px;transform:scaleX(0.9452);">Active</div>
<div class="tx" id="t19" style="top:270.00px;font-size:14px;line-height:14px;color:#5b5854;transform-origin:0 0;font-weight:bold;left:1781.00px;transform:scaleX(0.9395);">Action</div>
<div class="tx" id="t20" style="top:320.00px;font-size:14px;line-height:14px;color:#212121;transform-origin:0 0;left:128.98px;transform:scaleX(1.0224);">Lastminute</div>
<div class="tx" id="t21" style="top:323.00px;font-size:14px;line-height:14px;color:#6f6f6f;transform-origin:0 0;left:361.63px;transform:scaleX(1.0183);">Last Minute</div>
<div class="tx" id="t22" style="top:320.00px;font-size:14px;line-height:14px;color:#212121;transform-origin:0 0;left:520.85px;transform:scaleX(1.0333);">All</div>
<div class="tx" id="t23" style="top:320.00px;font-size:14px;line-height:14px;color:#212121;transform-origin:0 0;left:652.30px;transform:scaleX(1.0180);">Apartmani Toplice</div>
<div class="tx" id="t24" style="top:320.00px;font-size:14px;line-height:14px;color:#212121;transform-origin:0 0;left:863.16px;transform:scaleX(0.9909);">12 Apr, 2021</div>
<div class="tx" id="t25" style="top:320.00px;font-size:14px;line-height:14px;color:#212121;transform-origin:0 0;left:1032.86px;transform:scaleX(0.9909);">12 Apr, 2031</div>
<div class="tx" id="t26" style="top:320.00px;font-size:14px;line-height:14px;color:#212121;transform-origin:0 0;left:1199.36px;transform:scaleX(0.9909);">12 Apr, 2021</div>
<div class="tx" id="t27" style="top:320.00px;font-size:14px;line-height:14px;color:#212121;transform-origin:0 0;left:1362.06px;transform:scaleX(0.9909);">12 Apr, 2031</div>
<div class="tx" id="t28" style="top:320.00px;font-size:14px;line-height:14px;color:#212121;transform-origin:0 0;left:1510.46px;transform:scaleX(0.9391);">10,00<span style="color:#777">%</span></div>
<div class="tx" id="t29" style="top:323.00px;font-size:14px;line-height:14px;color:#800c0c;transform-origin:0 0;left:1612.13px;transform:scaleX(1.0176);">No</div>
<div class="tx" id="t30" style="top:323.00px;font-size:14px;line-height:14px;color:#23801f;transform-origin:0 0;left:1685.85px;transform:scaleX(0.9522);">Yes</div>
<div class="tx" id="t31" style="top:350.00px;font-size:14px;line-height:14px;color:#212121;transform-origin:0 0;left:129.01px;transform:scaleX(0.9929);">Boravak 7+ noći</div>
<div class="tx" id="t32" style="top:353.00px;font-size:14px;line-height:14px;color:#6f6f6f;transform-origin:0 0;left:367.57px;transform:scaleX(0.9758);">Long Stay</div>
<div class="tx" id="t33" style="top:350.00px;font-size:14px;line-height:14px;color:#212121;transform-origin:0 0;left:520.85px;transform:scaleX(1.0333);">All</div>
<div class="tx" id="t34" style="top:350.00px;font-size:14px;line-height:14px;color:#212121;transform-origin:0 0;left:652.30px;transform:scaleX(1.0180);">Apartmani Toplice</div>
<div class="tx" id="t35" style="top:350.00px;font-size:14px;line-height:14px;color:#212121;transform-origin:0 0;left:863.65px;transform:scaleX(0.9909);">09 Apr, 2021</div>
<div class="tx" id="t36" style="top:350.00px;font-size:14px;line-height:14px;color:#212121;transform-origin:0 0;left:1033.35px;transform:scaleX(0.9909);">05 Apr, 2031</div>
<div class="tx" id="t37" style="top:350.00px;font-size:14px;line-height:14px;color:#212121;transform-origin:0 0;left:1199.85px;transform:scaleX(0.9909);">09 Apr, 2021</div>
<div class="tx" id="t38" style="top:350.00px;font-size:14px;line-height:14px;color:#212121;transform-origin:0 0;left:1362.55px;transform:scaleX(0.9909);">05 Apr, 2031</div>
<div class="tx" id="t39" style="top:350.00px;font-size:14px;line-height:14px;color:#212121;transform-origin:0 0;left:1510.93px;transform:scaleX(0.9391);">20,00<span style="color:#777">%</span></div>
<div class="tx" id="t40" style="top:353.00px;font-size:14px;line-height:14px;color:#800c0c;transform-origin:0 0;left:1612.13px;transform:scaleX(1.0176);">No</div>
<div class="tx" id="t41" style="top:353.00px;font-size:14px;line-height:14px;color:#23801f;transform-origin:0 0;left:1685.85px;transform:scaleX(0.9522);">Yes</div>
<div class="tx" id="t42" style="top:380.00px;font-size:14px;line-height:14px;color:#212121;transform-origin:0 0;left:129.02px;transform:scaleX(0.9788);">Boravak 4-6 noći</div>
<div class="tx" id="t43" style="top:383.00px;font-size:14px;line-height:14px;color:#6f6f6f;transform-origin:0 0;left:367.57px;transform:scaleX(0.9758);">Long Stay</div>
<div class="tx" id="t44" style="top:380.00px;font-size:14px;line-height:14px;color:#212121;transform-origin:0 0;left:520.85px;transform:scaleX(1.0333);">All</div>
<div class="tx" id="t45" style="top:380.00px;font-size:14px;line-height:14px;color:#212121;transform-origin:0 0;left:652.30px;transform:scaleX(1.0180);">Apartmani Toplice</div>
<div class="tx" id="t46" style="top:380.00px;font-size:14px;line-height:14px;color:#212121;transform-origin:0 0;left:863.65px;transform:scaleX(0.9909);">01 Apr, 2021</div>
<div class="tx" id="t47" style="top:380.00px;font-size:14px;line-height:14px;color:#212121;transform-origin:0 0;left:1033.35px;transform:scaleX(0.9909);">01 Apr, 2031</div>
<div class="tx" id="t48" style="top:380.00px;font-size:14px;line-height:14px;color:#212121;transform-origin:0 0;left:1199.85px;transform:scaleX(0.9909);">01 Apr, 2021</div>
<div class="tx" id="t49" style="top:380.00px;font-size:14px;line-height:14px;color:#212121;transform-origin:0 0;left:1362.55px;transform:scaleX(0.9909);">01 Apr, 2031</div>
<div class="tx" id="t50" style="top:380.00px;font-size:14px;line-height:14px;color:#212121;transform-origin:0 0;left:1510.46px;transform:scaleX(0.9391);">15,00<span style="color:#777">%</span></div>
<div class="tx" id="t51" style="top:383.00px;font-size:14px;line-height:14px;color:#800c0c;transform-origin:0 0;left:1612.13px;transform:scaleX(1.0176);">No</div>
<div class="tx" id="t52" style="top:383.00px;font-size:14px;line-height:14px;color:#23801f;transform-origin:0 0;left:1685.85px;transform:scaleX(0.9522);">Yes</div>
<div class="tx" id="t53" style="top:410.00px;font-size:14px;line-height:14px;color:#212121;transform-origin:0 0;left:129.02px;transform:scaleX(0.9788);">Boravak 2-3 noći</div>
<div class="tx" id="t54" style="top:413.00px;font-size:14px;line-height:14px;color:#6f6f6f;transform-origin:0 0;left:367.57px;transform:scaleX(0.9758);">Long Stay</div>
<div class="tx" id="t55" style="top:410.00px;font-size:14px;line-height:14px;color:#212121;transform-origin:0 0;left:520.85px;transform:scaleX(1.0333);">All</div>
<div class="tx" id="t56" style="top:410.00px;font-size:14px;line-height:14px;color:#212121;transform-origin:0 0;left:652.30px;transform:scaleX(1.0180);">Apartmani Toplice</div>
<div class="tx" id="t57" style="top:410.00px;font-size:14px;line-height:14px;color:#212121;transform-origin:0 0;left:863.65px;transform:scaleX(0.9909);">01 Apr, 2021</div>
<div class="tx" id="t58" style="top:410.00px;font-size:14px;line-height:14px;color:#212121;transform-origin:0 0;left:1033.35px;transform:scaleX(0.9909);">01 Apr, 2031</div>
<div class="tx" id="t59" style="top:410.00px;font-size:14px;line-height:14px;color:#212121;transform-origin:0 0;left:1199.85px;transform:scaleX(0.9909);">01 Apr, 2021</div>
<div class="tx" id="t60" style="top:410.00px;font-size:14px;line-height:14px;color:#212121;transform-origin:0 0;left:1362.55px;transform:scaleX(0.9909);">01 Apr, 2031</div>
<div class="tx" id="t61" style="top:410.00px;font-size:14px;line-height:14px;color:#212121;transform-origin:0 0;left:1510.46px;transform:scaleX(0.9391);">10,00<span style="color:#777">%</span></div>
<div class="tx" id="t62" style="top:413.00px;font-size:14px;line-height:14px;color:#800c0c;transform-origin:0 0;left:1612.13px;transform:scaleX(1.0176);">No</div>
<div class="tx" id="t63" style="top:413.00px;font-size:14px;line-height:14px;color:#23801f;transform-origin:0 0;left:1685.85px;transform:scaleX(0.9522);">Yes</div>
<div class="tx" id="t64" style="top:440.00px;font-size:14px;line-height:14px;color:#212121;transform-origin:0 0;left:129.01px;transform:scaleX(0.9929);">Boravak 8+ noci</div>
<div class="tx" id="t65" style="top:443.00px;font-size:14px;line-height:14px;color:#6f6f6f;transform-origin:0 0;left:367.57px;transform:scaleX(0.9758);">Long Stay</div>
<div class="tx" id="t66" style="top:440.00px;font-size:14px;line-height:14px;color:#212121;transform-origin:0 0;left:520.85px;transform:scaleX(1.0333);">All</div>
<div class="tx" id="t67" style="top:440.00px;font-size:14px;line-height:14px;color:#212121;transform-origin:0 0;left:640.20px;">Hotel Villa Magdalena</div>
<div class="tx" id="t68" style="top:440.00px;font-size:14px;line-height:14px;color:#212121;transform-origin:0 0;left:861.67px;transform:scaleX(0.9909);">29 Aug, 2018</div>
<div class="tx" id="t69" style="top:440.00px;font-size:14px;line-height:14px;color:#212121;transform-origin:0 0;left:1031.37px;transform:scaleX(0.9909);">29 Aug, 2030</div>
<div class="tx" id="t70" style="top:440.00px;font-size:14px;line-height:14px;color:#212121;transform-origin:0 0;left:1197.87px;transform:scaleX(0.9909);">29 Aug, 2018</div>
<div class="tx" id="t71" style="top:440.00px;font-size:14px;line-height:14px;color:#212121;transform-origin:0 0;left:1360.57px;transform:scaleX(0.9909);">29 Aug, 2030</div>
<div class="tx" id="t72" style="top:440.00px;font-size:14px;line-height:14px;color:#212121;transform-origin:0 0;left:1510.93px;transform:scaleX(0.9391);">20,00<span style="color:#777">%</span></div>
<div class="tx" id="t73" style="top:443.00px;font-size:14px;line-height:14px;color:#800c0c;transform-origin:0 0;left:1612.13px;transform:scaleX(1.0176);">No</div>
<div class="tx" id="t74" style="top:443.00px;font-size:14px;line-height:14px;color:#23801f;transform-origin:0 0;left:1685.85px;transform:scaleX(0.9522);">Yes</div>
<div class="tx" id="t75" style="top:470.00px;font-size:14px;line-height:14px;color:#212121;transform-origin:0 0;left:129.01px;transform:scaleX(0.9925);">Boravak 5+7 noci</div>
<div class="tx" id="t76" style="top:473.00px;font-size:14px;line-height:14px;color:#6f6f6f;transform-origin:0 0;left:367.57px;transform:scaleX(0.9758);">Long Stay</div>
<div class="tx" id="t77" style="top:470.00px;font-size:14px;line-height:14px;color:#212121;transform-origin:0 0;left:520.85px;transform:scaleX(1.0333);">All</div>
<div class="tx" id="t78" style="top:470.00px;font-size:14px;line-height:14px;color:#212121;transform-origin:0 0;left:640.20px;">Hotel Villa Magdalena</div>
<div class="tx" id="t79" style="top:470.00px;font-size:14px;line-height:14px;color:#212121;transform-origin:0 0;left:863.16px;transform:scaleX(0.9909);">10 Apr, 2018</div>
<div class="tx" id="t80" style="top:470.00px;font-size:14px;line-height:14px;color:#212121;transform-origin:0 0;left:1032.86px;transform:scaleX(0.9909);">10 Apr, 2030</div>
<div class="tx" id="t81" style="top:470.00px;font-size:14px;line-height:14px;color:#212121;transform-origin:0 0;left:1199.36px;transform:scaleX(0.9909);">10 Apr, 2018</div>
<div class="tx" id="t82" style="top:470.00px;font-size:14px;line-height:14px;color:#212121;transform-origin:0 0;left:1362.06px;transform:scaleX(0.9909);">10 Apr, 2030</div>
<div class="tx" id="t83" style="top:470.00px;font-size:14px;line-height:14px;color:#212121;transform-origin:0 0;left:1510.46px;transform:scaleX(0.9391);">15,00<span style="color:#777">%</span></div>
<div class="tx" id="t84" style="top:473.00px;font-size:14px;line-height:14px;color:#800c0c;transform-origin:0 0;left:1612.13px;transform:scaleX(1.0176);">No</div>
<div class="tx" id="t85" style="top:473.00px;font-size:14px;line-height:14px;color:#23801f;transform-origin:0 0;left:1685.85px;transform:scaleX(0.9522);">Yes</div>
<div class="tx" id="t86" style="top:500.00px;font-size:14px;line-height:14px;color:#212121;transform-origin:0 0;left:129.02px;transform:scaleX(0.9788);">Boravak 2-4 noci</div>
<div class="tx" id="t87" style="top:503.00px;font-size:14px;line-height:14px;color:#6f6f6f;transform-origin:0 0;left:367.57px;transform:scaleX(0.9758);">Long Stay</div>
<div class="tx" id="t88" style="top:500.00px;font-size:14px;line-height:14px;color:#212121;transform-origin:0 0;left:520.85px;transform:scaleX(1.0333);">All</div>
<div class="tx" id="t89" style="top:500.00px;font-size:14px;line-height:14px;color:#212121;transform-origin:0 0;left:640.20px;">Hotel Villa Magdalena</div>
<div class="tx" id="t90" style="top:500.00px;font-size:14px;line-height:14px;color:#212121;transform-origin:0 0;left:863.16px;transform:scaleX(0.9909);">10 Apr, 2018</div>
<div class="tx" id="t91" style="top:500.00px;font-size:14px;line-height:14px;color:#212121;transform-origin:0 0;left:1032.86px;transform:scaleX(0.9909);">10 Apr, 2030</div>
<div class="tx" id="t92" style="top:500.00px;font-size:14px;line-height:14px;color:#212121;transform-origin:0 0;left:1199.36px;transform:scaleX(0.9909);">10 Apr, 2018</div>
<div class="tx" id="t93" style="top:500.00px;font-size:14px;line-height:14px;color:#212121;transform-origin:0 0;left:1362.06px;transform:scaleX(0.9909);">10 Apr, 2030</div>
<div class="tx" id="t94" style="top:500.00px;font-size:14px;line-height:14px;color:#212121;transform-origin:0 0;left:1510.46px;transform:scaleX(0.9391);">10,00<span style="color:#777">%</span></div>
<div class="tx" id="t95" style="top:503.00px;font-size:14px;line-height:14px;color:#800c0c;transform-origin:0 0;left:1612.13px;transform:scaleX(1.0176);">No</div>
<div class="tx" id="t96" style="top:503.00px;font-size:14px;line-height:14px;color:#23801f;transform-origin:0 0;left:1685.85px;transform:scaleX(0.9522);">Yes</div>
<div class="tx" id="t97" style="top:25.50px;font-size:12px;line-height:12px;color:#fff;transform-origin:0 0;font-weight:bold;left:189.60px;transform:scaleX(0.9548);">WebBooking</div>
<div class="tx" id="t98" style="top:26.20px;font-size:6px;line-height:6px;color:#b8bcc4;transform-origin:0 0;left:261.00px;">Pro</div>
<div class="tx" id="t99" style="top:554.90px;font-size:14px;line-height:14px;color:#6b6b6b;transform-origin:0 0;font-weight:bold;left:129.23px;transform:scaleX(0.9659);">Pages:</div>
<div class="tx" id="t100" style="top:554.80px;font-size:14px;line-height:14px;color:#777;transform-origin:0 0;left:1784.00px;transform:scaleX(0.9736);"><b>Total</b>: 1 - 7 / 7</div>
</body></html>
